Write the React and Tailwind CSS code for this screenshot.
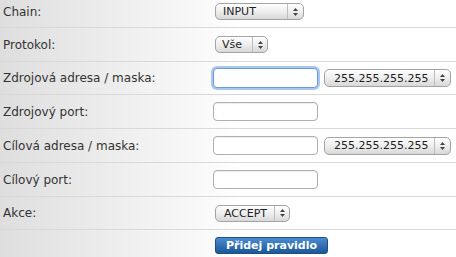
import React from "react";

function Arrows() {
  return (
    <svg width="5" height="8" viewBox="0 0 5 8" className="block">
      <path d="M2.5 0 L5 3 H0 Z" fill="#444" />
      <path d="M0 5 H5 L2.5 8 Z" fill="#444" />
    </svg>
  );
}

function Sel({ label, w, h = "h-[17px]", pl = "pl-[7px]", arrowW = "w-[15px]" }) {
  return (
    <div
      className={`flex ${w} ${h} items-stretch rounded-[5px] border border-[#a3a3a3] bg-gradient-to-b from-[#fdfdfd] via-[#eeeeee] to-[#d8d8d8] shadow-[inset_0_1px_0_#fff]`}
    >
      <div className={`flex flex-1 items-center ${pl} text-[11px] leading-none text-[#1e1e1e]`}>
        {label}
      </div>
      <div className={`flex ${arrowW} items-center justify-center border-l border-[#bdbdbd]`}>
        <Arrows />
      </div>
    </div>
  );
}

function TextInput({ focused }) {
  return (
    <div
      className={
        focused
          ? "h-[20px] w-[105px] rounded-[4px] border border-[#6b9bd6] bg-white shadow-[0_0_0_2px_#a9c7ef]"
          : "h-[19px] w-[105px] rounded-[4px] border border-[#b0b0b0] bg-white shadow-[inset_0_1px_1px_rgba(0,0,0,0.08)]"
      }
    />
  );
}

function Row({ label, children, cls }) {
  return (
    <div className={`flex box-border border-b border-[#d9d9d9] ${cls}`}>
      <div className="w-[213px] pl-[3px] text-[12px] text-[#333]">{label}</div>
      <div className="flex items-center gap-[6px]">{children}</div>
    </div>
  );
}

export default function App() {
  return (
    <div
      className="h-[257px] w-[456px] overflow-hidden bg-[linear-gradient(to_right,#dedede,#ffffff_245px)]"
      style={{ fontFamily: '"DejaVu Sans", Verdana, sans-serif' }}
    >
      <Row label="Chain:" cls="h-[28px] items-center pb-[4px]">
        <div className="pl-[2px]">
          <Sel label="INPUT" w="w-[89px]" pl="pl-[7px]" arrowW="w-[16px]" />
        </div>
      </Row>
      <Row label="Protokol:" cls="h-[34px] items-center">
        <div className="pl-[2px]">
          <Sel label="Vše" w="w-[53px]" pl="pl-[6px]" arrowW="w-[15px]" />
        </div>
      </Row>
      <Row label="Zdrojová adresa / maska:" cls="h-[33px] items-center">
        <TextInput focused />
        <Sel label="255.255.255.255" w="w-[127px]" h="h-[18px]" pl="pl-[9px]" arrowW="w-[16px]" />
      </Row>
      <Row label="Zdrojový port:" cls="h-[34px] items-center">
        <TextInput />
      </Row>
      <Row label="Cílová adresa / maska:" cls="h-[34px] items-center">
        <TextInput />
        <Sel label="255.255.255.255" w="w-[127px]" h="h-[18px]" pl="pl-[9px]" arrowW="w-[16px]" />
      </Row>
      <Row label="Cílový port:" cls="h-[34px] items-center">
        <TextInput />
      </Row>
      <Row label="Akce:" cls="h-[33px] items-center">
        <div className="pl-[2px]">
          <Sel label="ACCEPT" w="w-[75px]" pl="pl-[8px]" arrowW="w-[15px]" />
        </div>
      </Row>
      <div className="flex h-[27px] items-start pt-[7px]">
        <div className="w-[215px]" />
        <button className="flex h-[17px] w-[113px] items-center justify-center rounded-[3px] border border-[#1f4f86] bg-gradient-to-b from-[#4a8bd0] to-[#1b5898] text-[11px] font-bold leading-none text-white">
          Přidej pravidlo
        </button>
      </div>
    </div>
  );
}
